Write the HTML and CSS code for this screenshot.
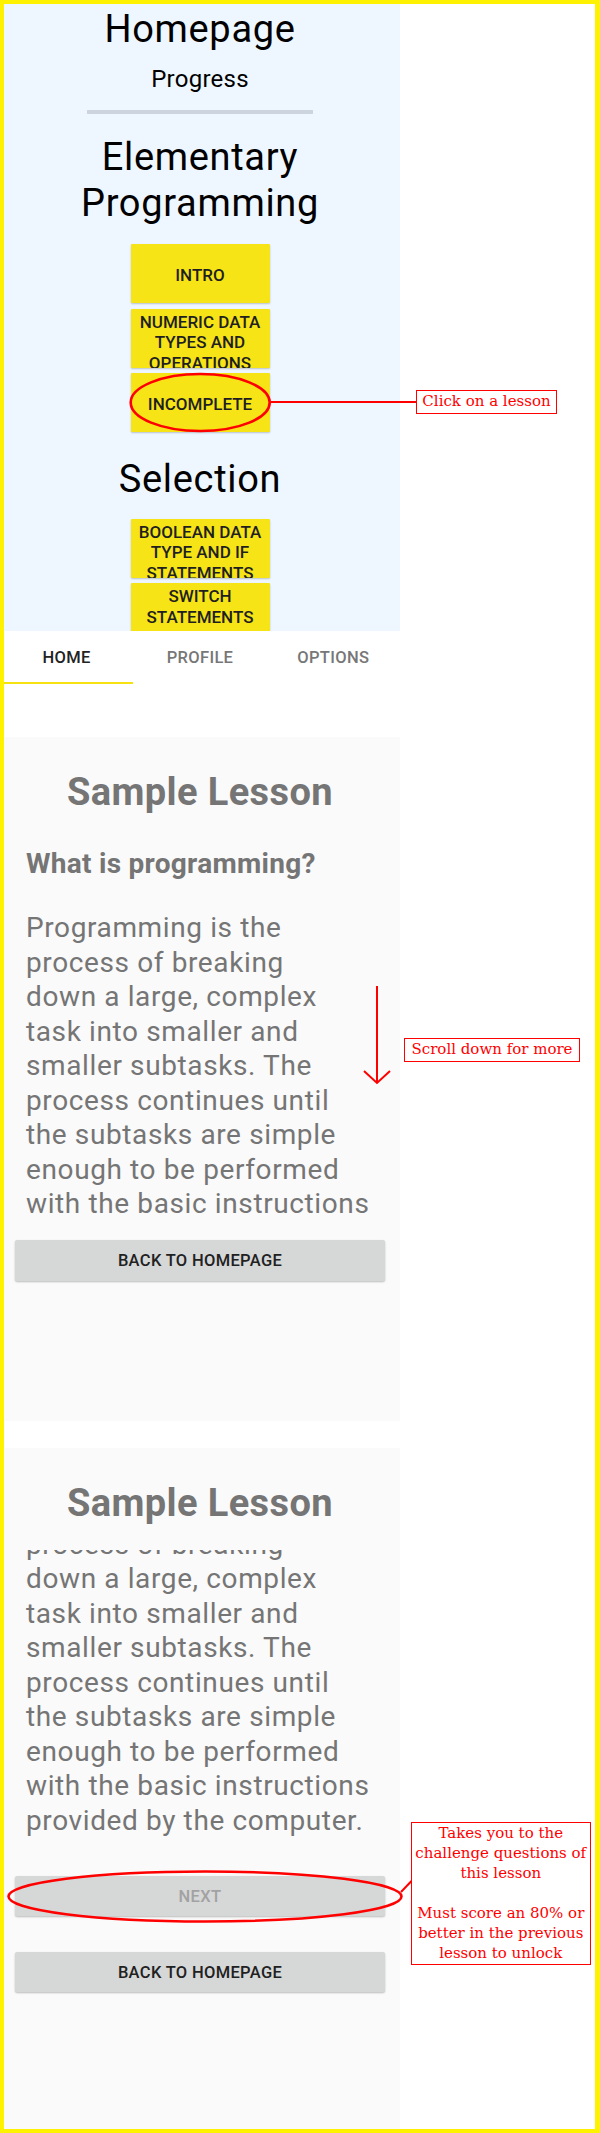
FILE: index.html
```html
<!DOCTYPE html>
<html lang="en">
<head>
<meta charset="utf-8">
<title>Lesson app walkthrough</title>
<link rel="stylesheet" href="styles.css">
</head>
<body>
<div class="frame">
  <div class="screens">
    <section class="home">
      <h1 class="home-title">Homepage</h1>
      <div class="progress">Progress</div>
      <div class="divider"></div>
      <h2 class="unit-title">Elementary Programming</h2>
      <div class="lesson-list">
        <div class="lesson-btn"><span>INTRO</span></div>
        <div class="lesson-btn"><span>NUMERIC DATA TYPES AND OPERATIONS</span></div>
        <div class="lesson-btn"><span>INCOMPLETE</span></div>
      </div>
      <h2 class="unit-title unit-next">Selection</h2>
      <div class="lesson-list list-next">
        <div class="lesson-btn"><span>BOOLEAN DATA TYPE AND IF STATEMENTS</span></div>
        <div class="lesson-btn"><span>SWITCH STATEMENTS AND CONDITIONAL OPERATORS</span></div>
      </div>
    </section>

    <nav class="tabs">
      <div class="tab active">HOME</div>
      <div class="tab">PROFILE</div>
      <div class="tab">OPTIONS</div>
    </nav>

    <section class="lesson lesson-top">
      <h1 class="lesson-title">Sample Lesson</h1>
      <div class="viewport viewport-top">
        <div class="content">
          <h2 class="lesson-sub">What is programming?</h2>
          <p class="lesson-text">Programming is the<br>process of breaking<br>down a large, complex<br>task into smaller and<br>smaller subtasks. The<br>process continues until<br>the subtasks are simple<br>enough to be performed<br>with the basic instructions<br>provided by the computer.</p>
        </div>
      </div>
      <div class="btn back-top">BACK TO HOMEPAGE</div>
    </section>

    <section class="lesson lesson-bottom">
      <h1 class="lesson-title">Sample Lesson</h1>
      <div class="viewport viewport-bottom">
        <div class="content scrolled">
          <h2 class="lesson-sub">What is programming?</h2>
          <p class="lesson-text">Programming is the<br>process of breaking<br>down a large, complex<br>task into smaller and<br>smaller subtasks. The<br>process continues until<br>the subtasks are simple<br>enough to be performed<br>with the basic instructions<br>provided by the computer.</p>
        </div>
      </div>
      <div class="btn btn-disabled next">NEXT</div>
      <div class="btn back-bottom">BACK TO HOMEPAGE</div>
    </section>
  </div>

  <svg class="marks" width="600" height="2133" viewBox="0 0 600 2133" aria-hidden="true">
    <ellipse cx="200.2" cy="402.5" rx="69.5" ry="28.5" fill="none" stroke="#ff0000" stroke-width="2.6"/>
    <line x1="271" y1="402" x2="416" y2="402" stroke="#ff0000" stroke-width="2"/>
    <path d="M377 986 V1083 M364 1071 L377 1083 L390 1071" fill="none" stroke="#ff0000" stroke-width="2"/>
    <ellipse cx="205" cy="1896.5" rx="196.5" ry="25" fill="none" stroke="#ff0000" stroke-width="2.6"/>
    <line x1="401" y1="1892" x2="411.5" y2="1881" stroke="#ff0000" stroke-width="2"/>
  </svg>

  <div class="note note-click">Click on a lesson</div>
  <div class="note note-scroll">Scroll down for more</div>
  <div class="note note-next">Takes you to the<br>challenge questions of<br>this lesson<br><br>Must score an 80% or<br>better in the previous<br>lesson to unlock</div>
</div>
</body>
</html>
```

FILE: styles.css
```css
html, body {
  margin: 0;
  padding: 0;
  background: #ffffff;
}

.frame {
  position: relative;
  width: 600px;
  height: 2133px;
  overflow: hidden;
  background: #ffffff;
  font-family: Roboto, "Noto Sans", "Liberation Sans", sans-serif;
}

.frame::after {
  content: "";
  position: absolute;
  inset: 0;
  border: 4px solid #fff200;
  border-right-width: 5px;
  pointer-events: none;
  z-index: 6;
}

.screens {
  width: 400px;
  height: 2133px;
  display: flex;
  flex-direction: column;
}

/* ---------- Home screen ---------- */
.home {
  height: 631px;
  flex: none;
  box-sizing: border-box;
  padding-top: 7px;
  background: #eef7ff;
  overflow: hidden;
  text-align: center;
  color: #000000;
}

.home-title {
  margin: 0;
  font-size: 38px;
  font-weight: 400;
  line-height: 44.5px;
  letter-spacing: 0.018em;
}

.progress {
  margin-top: 13px;
  font-size: 24px;
  line-height: 28px;
  letter-spacing: 0.01em;
}

.divider {
  width: 226px;
  height: 4px;
  margin: 17.5px auto 0;
  background: #cdd4de;
}

.unit-title {
  margin: 20px auto 0;
  width: 300px;
  font-size: 38px;
  font-weight: 400;
  line-height: 46px;
  letter-spacing: 0.018em;
}

.unit-next {
  margin-top: 23.5px;
}

.lesson-list {
  margin-top: 18px;
  display: flex;
  flex-direction: column;
  align-items: center;
  gap: 5.5px;
}

.list-next {
  margin-top: 17px;
}

.lesson-btn {
  width: 139px;
  height: 59px;
  box-sizing: border-box;
  padding: 3px 3px 0;
  flex: none;
  display: flex;
  align-items: safe center;
  justify-content: center;
  overflow: hidden;
  background: #f6e417;
  border-radius: 1px;
  box-shadow: 0 1px 2px rgba(0, 0, 0, 0.22);
  color: #1f1f1f;
  font-size: 17px;
  font-weight: 500;
  line-height: 20.5px;
  text-align: center;
}

/* ---------- Tabs ---------- */
.tabs {
  height: 53px;
  flex: none;
  margin-bottom: 53px;
  display: grid;
  grid-template-columns: repeat(3, 1fr);
  background: #ffffff;
}

.tab {
  position: relative;
  display: flex;
  align-items: center;
  justify-content: center;
  color: #777777;
  font-size: 16.5px;
  font-weight: 500;
  letter-spacing: 0.02em;
}

.tab.active {
  color: #222222;
}

.tab.active::after {
  content: "";
  position: absolute;
  left: 0;
  right: 0;
  bottom: 0;
  height: 2px;
  background: #f5e20f;
}

/* ---------- Lesson screens ---------- */
.lesson {
  flex: none;
  box-sizing: border-box;
  padding-top: 33px;
  background: #fafafa;
  display: flex;
  flex-direction: column;
}

.lesson-top {
  height: 684px;
  margin-bottom: 27px;
}

.lesson-bottom {
  flex: 1;
}

.lesson-title {
  margin: 0;
  text-align: center;
  color: #757575;
  font-size: 38px;
  font-weight: 700;
  line-height: 44.5px;
  letter-spacing: 0.01em;
}

.viewport {
  margin-top: 24.5px;
  overflow: hidden;
  flex: none;
}

.viewport-top {
  height: 387px;
}

.viewport-bottom {
  height: 289px;
}

.content {
  padding: 8px 20px 0 26px;
}

.content.scrolled {
  margin-top: -129px;
}

.lesson-sub {
  margin: 0;
  color: #757575;
  font-size: 28px;
  font-weight: 700;
  line-height: 33px;
  letter-spacing: 0.01em;
}

.lesson-text {
  margin: 31px 0 0;
  color: #757575;
  font-size: 28px;
  font-weight: 400;
  line-height: 34.5px;
  letter-spacing: 0.022em;
  white-space: nowrap;
}

.btn {
  flex: none;
  height: 40px;
  margin: 0 15px;
  display: flex;
  align-items: center;
  justify-content: center;
  background: #d6d7d7;
  border-radius: 2px;
  box-shadow: 0 1px 2px rgba(0, 0, 0, 0.25);
  color: #212121;
  font-size: 16.5px;
  font-weight: 500;
  letter-spacing: 0.02em;
}

.back-top {
  margin-top: 13.5px;
  height: 41px;
}

.next {
  margin-top: 37px;
}

.btn-disabled {
  color: #a2a2a2;
}

.back-bottom {
  margin-top: 36px;
}

/* ---------- Annotations ---------- */
.marks {
  position: absolute;
  left: 0;
  top: 0;
  z-index: 4;
  pointer-events: none;
}

.note {
  position: absolute;
  z-index: 5;
  box-sizing: border-box;
  border: 1.5px solid #ff0000;
  background: #ffffff;
  color: #ff0000;
  font-family: "DejaVu Serif", "Liberation Serif", serif;
  font-size: 15px;
  line-height: 20px;
  text-align: center;
  white-space: nowrap;
}

.note-click {
  left: 416px;
  top: 390px;
  width: 141px;
  height: 23.5px;
}

.note-scroll {
  left: 404px;
  top: 1038px;
  width: 176px;
  height: 24px;
  line-height: 21px;
}

.note-next {
  left: 411px;
  top: 1822px;
  width: 179.5px;
  height: 142.5px;
}
```
